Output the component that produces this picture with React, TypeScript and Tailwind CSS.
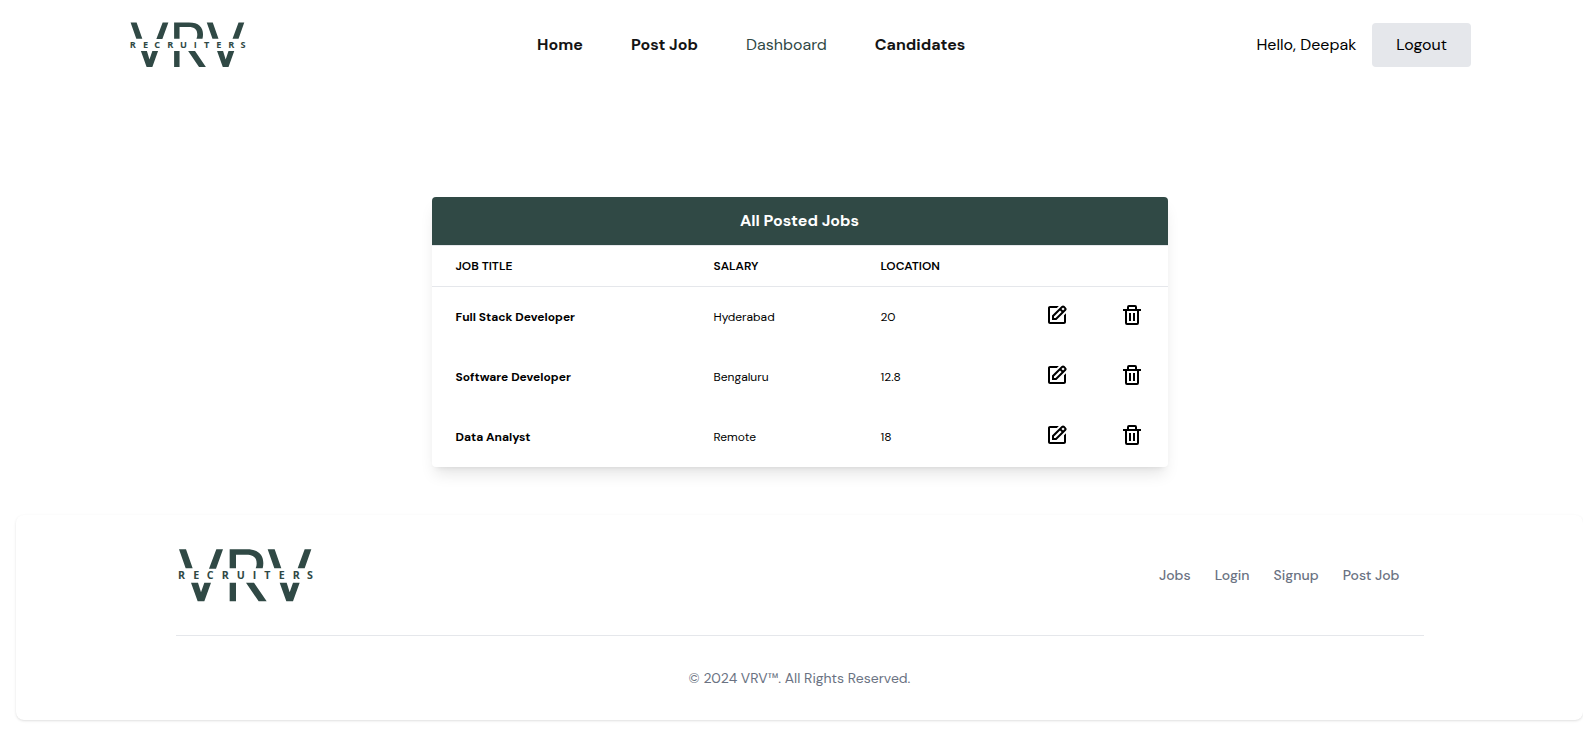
import { BiEdit, BiTrash } from "react-icons/bi";

const navLinks = [
  { label: "Home", active: false },
  { label: "Post Job", active: false },
  { label: "Dashboard", active: true },
  { label: "Candidates", active: false },
];

const jobs = [
  { title: "Full Stack Developer", salary: "Hyderabad", location: "20" },
  { title: "Software Developer", salary: "Bengaluru", location: "12.8" },
  { title: "Data Analyst", salary: "Remote", location: "18" },
];

const footerLinks = ["Jobs", "Login", "Signup", "Post Job"];

function Logo({ className }: { className: string }) {
  return (
    <svg viewBox="528 140 426 168" className={className} fill="#304945" role="img" aria-label="VRV Recruiters">
      <path d="M537 147h21l20 57h-21zM649 147h20l-21 58h-21zM573 247h21l9 29 10-29h20l-20 56h-20z" />
      <path d="M689 147h52c34 0 49 16 49 42 0 6-1 11-2 15h-21c2-5 3-9 3-14 0-18-9-27-31-27h-31v41h-19zM689 247h19v56h-19zM738 247h24l38 56h-24z" />
      <path d="M803 147h21l20 57h-21zM914 147h20l-20 57h-21zM839 247h21l9 29 10-29h20l-20 56h-20z" />
      <text
        x="534 580 620 665 710 758 793 836 878 921"
        y="236"
        fontFamily="'Open Sans', sans-serif"
        fontSize="32"
        fontWeight="700"
      >
        RECRUITERS
      </text>
    </svg>
  );
}

export default function App() {
  return (
    <div className="overflow-x-hidden bg-white font-['DM_Sans',Inter,sans-serif] text-black">
      <header className="flex items-center justify-between px-28 py-5">
        <a href="#" className="-mr-1 pl-4">
          <Logo className="h-[49px] w-[122px]" />
        </a>
        <nav className="flex gap-12">
          {navLinks.map((link) => (
            <a
              key={link.label}
              href="#"
              className={link.active ? "text-base text-[#304945]" : "text-base font-bold text-[#141414]"}
            >
              {link.label}
            </a>
          ))}
        </nav>
        <div className="flex items-center gap-4">
          <span>Hello, Deepak</span>
          <button type="button" className="rounded bg-gray-200 px-6 py-[10px]">
            Logout
          </button>
        </div>
      </header>

      <main className="ml-4 pt-[108px]">
        <section className="mx-auto max-w-[736px] overflow-hidden rounded bg-white shadow-lg">
          <h1 className="bg-[#304945] py-3 text-center text-base font-bold text-white">All Posted Jobs</h1>
          <table className="w-full table-fixed border-collapse text-left text-xs">
            <colgroup>
              <col className="w-[258px]" />
              <col className="w-[167px]" />
              <col className="w-[164px]" />
              <col className="w-[75px]" />
              <col className="w-[72px]" />
            </colgroup>
            <thead>
              <tr className="border-y border-gray-200 uppercase">
                <th className="px-6 py-3 font-semibold">Job Title</th>
                <th className="px-6 py-3 font-semibold">Salary</th>
                <th className="px-6 py-3 font-semibold">Location</th>
                <th className="px-6 py-3" />
                <th className="px-6 py-3" />
              </tr>
            </thead>
            <tbody>
              {jobs.map((job) => (
                <tr key={job.title}>
                  <th scope="row" className="px-6 py-4 font-bold">{job.title}</th>
                  <td className="px-6 py-4">{job.salary}</td>
                  <td className="px-6 py-4">{job.location}</td>
                  <td className="px-6 py-4">
                    <button type="button" aria-label={`Edit ${job.title}`} className="block pb-1">
                      <BiEdit className="size-6" />
                    </button>
                  </td>
                  <td className="px-6 py-4">
                    <button type="button" aria-label={`Delete ${job.title}`} className="block pb-1">
                      <BiTrash className="size-6" />
                    </button>
                  </td>
                </tr>
              ))}
            </tbody>
          </table>
        </section>
      </main>

      <footer className="mt-12 mb-6 ml-4 rounded-lg bg-white py-8 shadow-sm">
        <div className="mx-auto max-w-[1248px]">
          <div className="flex items-center justify-between">
            <a href="#">
              <Logo className="h-[56px] w-[142px]" />
            </a>
            <ul className="flex gap-6 pr-6 text-sm font-medium text-gray-500">
              {footerLinks.map((label) => (
                <li key={label}>
                  <a href="#">{label}</a>
                </li>
              ))}
            </ul>
          </div>
          <hr className="my-8 border-gray-200" />
          <p className="text-center text-sm text-gray-500">© 2024 VRV™. All Rights Reserved.</p>
        </div>
      </footer>
    </div>
  );
}
